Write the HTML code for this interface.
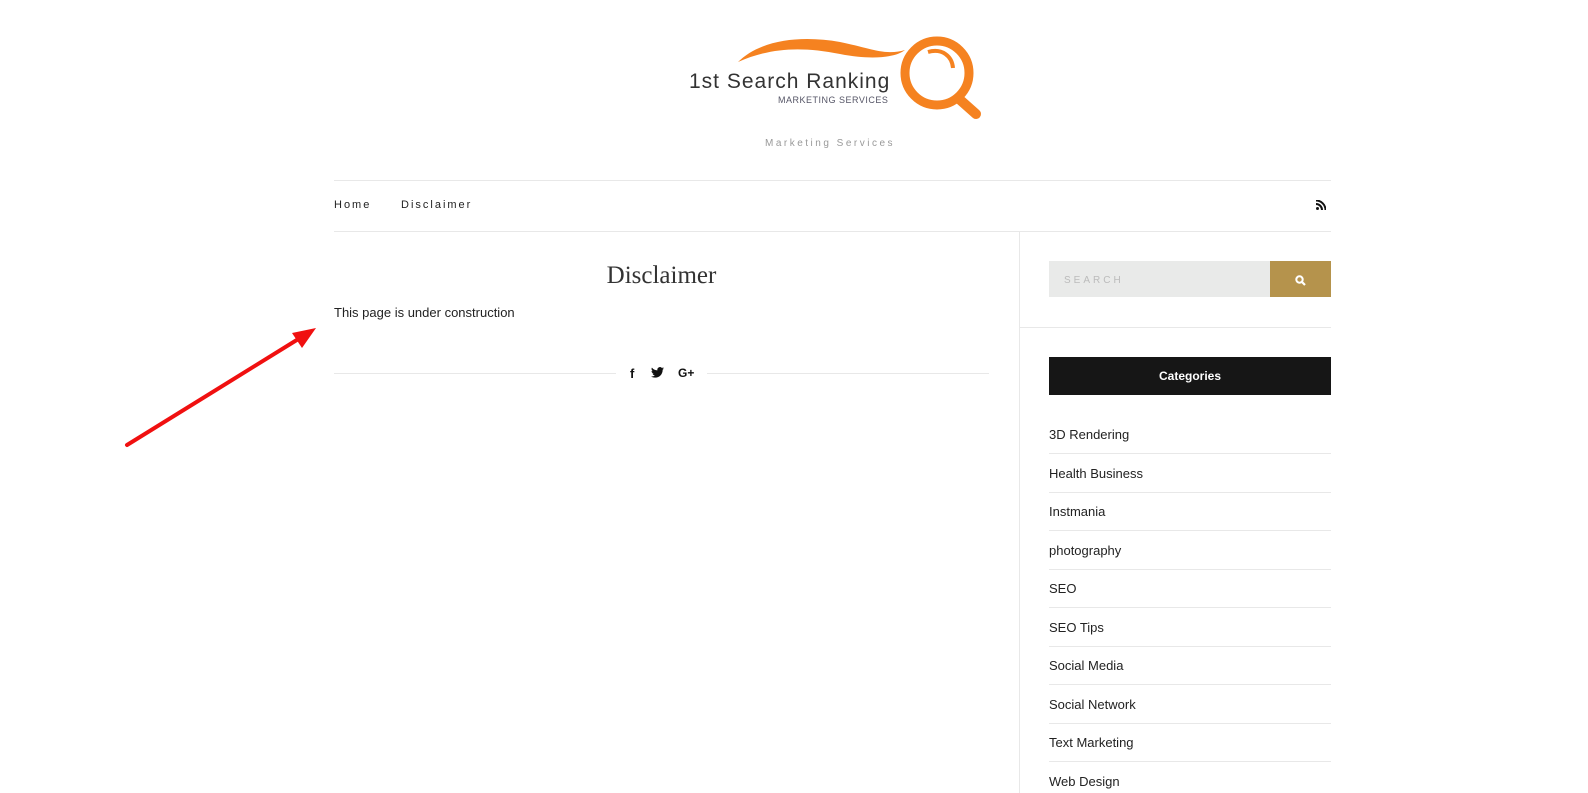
<!DOCTYPE html>
<html><head><meta charset="utf-8"><style>
body{margin:0;background:#fff;font-family:"Liberation Sans",sans-serif;width:1588px;height:793px;overflow:hidden;position:relative;color:#222}
.a{position:absolute}
.hl{position:absolute;height:1px;background:#e8e8e8}
.cat{position:absolute;left:1049px;width:282px;font-size:13px;color:#222}
</style></head><body>
<svg class="a" style="left:680px;top:20px" width="320" height="135">
<path d="M58 42 C80 20 120 15 160 22 C190 28 205 36 225 30 C215 38 190 40 160 34 C120 26 90 28 58 42Z" fill="#f58220"/>
<circle cx="257" cy="53" r="32" fill="none" stroke="#f58220" stroke-width="9"/>
<path d="M248 32 C262 28 272 36 273 48" fill="none" stroke="#f58220" stroke-width="4"/>
<line x1="278" y1="78" x2="296" y2="94" stroke="#f58220" stroke-width="10" stroke-linecap="round"/>
<text x="9" y="68" font-family="Liberation Sans" font-size="21" fill="#333" letter-spacing="1">1st Search Ranking</text>
<text x="98" y="83" font-family="Liberation Sans" font-size="9" fill="#556" letter-spacing=".5">MARKETING SERVICES</text>
<text x="85" y="126" font-family="Liberation Sans" font-size="10" fill="#999" letter-spacing="2.5">Marketing Services</text>
</svg>
<div class="hl" style="left:334px;top:180px;width:997px"></div>
<div class="hl" style="left:334px;top:231px;width:997px"></div>
<div class="a" style="left:334px;top:199px;font-size:11px;letter-spacing:2px;color:#222">Home</div>
<div class="a" style="left:401px;top:199px;font-size:11px;letter-spacing:2px;color:#222">Disclaimer</div>
<svg class="a" style="left:1316px;top:200px" width="10" height="10"><circle cx="1.5" cy="8.5" r="1.5" fill="#111"/><path d="M0 4a6 6 0 0 1 6 6M0 0.5a9.5 9.5 0 0 1 9.5 9.5" fill="none" stroke="#111" stroke-width="2"/></svg>
<div class="a" style="left:334px;top:262px;width:655px;text-align:center;font-family:'Liberation Serif',serif;font-size:25px;color:#333">Disclaimer</div>
<div class="a" style="left:334px;top:305px;font-size:13px;color:#222">This page is under construction</div>
<div class="hl" style="left:334px;top:373px;width:282px"></div>
<div class="hl" style="left:707px;top:373px;width:282px"></div>
<div class="a" style="left:630px;top:366px;font-size:13px;font-weight:bold;color:#111">f</div>
<svg class="a" style="left:651px;top:367px" width="13" height="11" viewBox="0 0 24 20"><path d="M24 2.4a10 10 0 0 1-2.8.8A5 5 0 0 0 23.3.4a10 10 0 0 1-3.1 1.2A4.9 4.9 0 0 0 11.8 6 14 14 0 0 1 1.7.9a4.9 4.9 0 0 0 1.5 6.6A4.9 4.9 0 0 1 1 6.9a4.9 4.9 0 0 0 3.9 4.9 5 5 0 0 1-2.2.1 4.9 4.9 0 0 0 4.6 3.4A9.9 9.9 0 0 1 0 17.3 14 14 0 0 0 7.5 19.5c9 0 14-7.5 14-14v-.6A10 10 0 0 0 24 2.4z" fill="#111"/></svg>
<div class="a" style="left:678px;top:366px;font-size:12px;font-weight:bold;color:#111">G+</div>
<div class="a" style="left:1019px;top:232px;width:1px;height:561px;background:#e8e8e8"></div>
<div class="hl" style="left:1019px;top:327px;width:312px"></div>
<div class="a" style="left:1049px;top:261px;width:221px;height:36px;background:#e9eae9"></div>
<div class="a" style="left:1064px;top:275px;font-size:10px;letter-spacing:3px;color:#bbb">SEARCH</div>
<div class="a" style="left:1270px;top:261px;width:61px;height:36px;background:#b5934c"></div>
<svg class="a" style="left:1295px;top:275px" width="11" height="11"><circle cx="4.5" cy="4.5" r="3.2" fill="none" stroke="#fff" stroke-width="2"/><line x1="7" y1="7" x2="10" y2="10" stroke="#fff" stroke-width="2.2"/></svg>
<div class="a" style="left:1049px;top:357px;width:282px;height:38px;background:#161616;color:#fff;font-size:12px;font-weight:bold;text-align:center;line-height:39px">Categories</div>
<div class="cat" style="top:427px">3D Rendering</div><div class="hl" style="left:1049px;top:453px;width:282px"></div>
<div class="cat" style="top:466px">Health Business</div><div class="hl" style="left:1049px;top:492px;width:282px"></div>
<div class="cat" style="top:504px">Instmania</div><div class="hl" style="left:1049px;top:530px;width:282px"></div>
<div class="cat" style="top:543px">photography</div><div class="hl" style="left:1049px;top:569px;width:282px"></div>
<div class="cat" style="top:581px">SEO</div><div class="hl" style="left:1049px;top:607px;width:282px"></div>
<div class="cat" style="top:620px">SEO Tips</div><div class="hl" style="left:1049px;top:646px;width:282px"></div>
<div class="cat" style="top:658px">Social Media</div><div class="hl" style="left:1049px;top:684px;width:282px"></div>
<div class="cat" style="top:697px">Social Network</div><div class="hl" style="left:1049px;top:723px;width:282px"></div>
<div class="cat" style="top:735px">Text Marketing</div><div class="hl" style="left:1049px;top:761px;width:282px"></div>
<div class="cat" style="top:774px">Web Design</div>
<svg class="a" style="left:0;top:0" width="400" height="500"><line x1="127" y1="445" x2="300" y2="338" stroke="#f01010" stroke-width="4" stroke-linecap="round"/><polygon points="316,328 292,333 302,348" fill="#f01010"/></svg>
</body></html>
